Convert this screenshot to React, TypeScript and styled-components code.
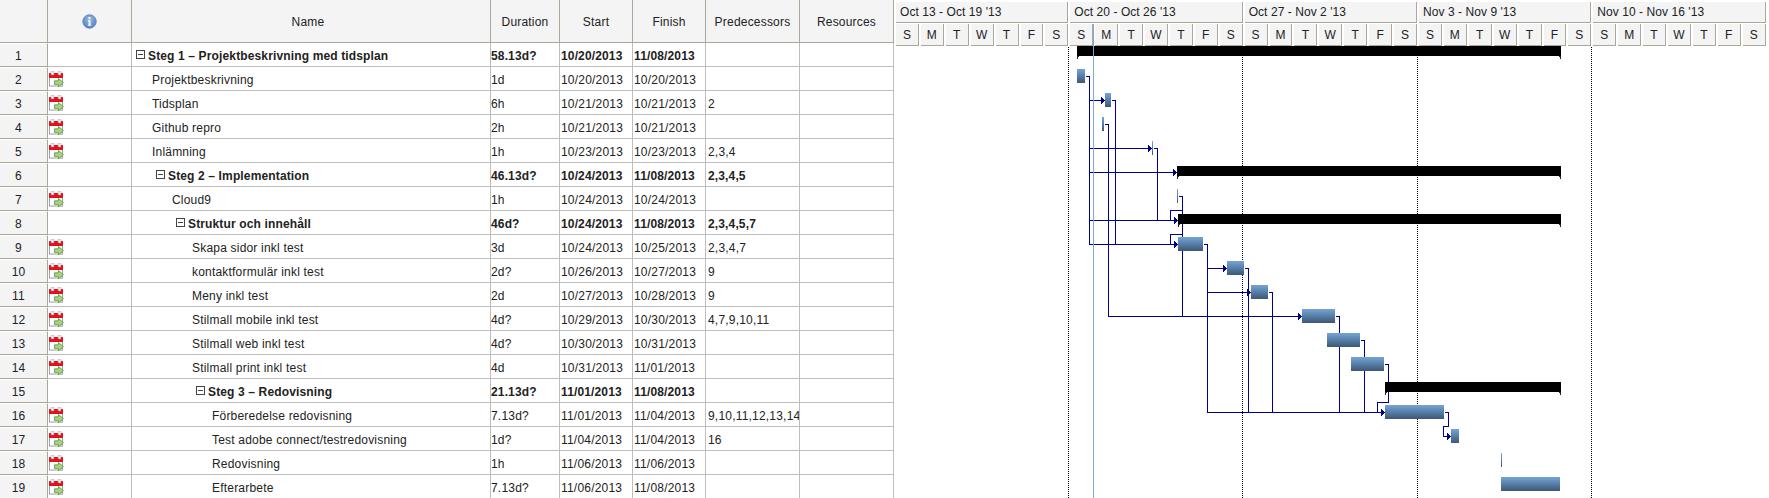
import styled, { createGlobalStyle } from 'styled-components';

const COLUMNS = '48px 84px 359px 69px 73px 73px 94px 94px';
const TAN = '#aca899';
const GRID = '#bdbdbd';
const LINK = '#00008b';

const GlobalStyle = createGlobalStyle`
  html, body {
    margin: 0;
    padding: 0;
    background: #fff;
    overflow: hidden;
  }
  body {
    font-family: "Liberation Sans", Arial, sans-serif;
    font-size: 12px;
    letter-spacing: 0.2px;
    color: #222;
  }
`;

const S = {
  Page: styled.div`
    display: flex;
    width: 1769px;
    height: 498px;
    overflow: hidden;
  `,
  Table: styled.div`
    width: 894px;
    flex: none;
  `,
  HeaderRow: styled.div`
    display: grid;
    grid-template-columns: ${COLUMNS};
    height: 43px;
  `,
  HeaderCell: styled.div<{ $shift?: number }>`
    display: flex;
    align-items: center;
    justify-content: center;
    padding: 1px ${(p) => p.$shift ?? 0}px 0 0;
    background: #f4f4f4;
    border-right: 1px solid ${TAN};
    border-bottom: 1px solid ${TAN};
    box-sizing: border-box;
  `,
  Row: styled.div<{ $summary: boolean }>`
    display: grid;
    grid-template-columns: ${COLUMNS};
    height: 24px;
    font-weight: ${(p) => (p.$summary ? 700 : 400)};
    letter-spacing: ${(p) => (p.$summary ? 0.14 : 0.2)}px;
  `,
  RowNumber: styled.div`
    display: flex;
    align-items: center;
    justify-content: center;
    padding: 1px 10px 0 0;
    background: #f4f4f4;
    border-top: 1px solid #fff;
    border-right: 1px solid ${TAN};
    border-bottom: 1px solid ${TAN};
    box-sizing: border-box;
    font-weight: 400;
  `,
  IconCell: styled.div`
    display: flex;
    align-items: flex-start;
    padding: 4px 0 0 1px;
    border-right: 1px solid ${GRID};
    border-bottom: 1px solid ${GRID};
    box-sizing: border-box;
  `,
  NameCell: styled.div<{ $indent: number }>`
    display: flex;
    align-items: center;
    gap: 3px;
    padding: 2px 0 0 ${(p) => p.$indent}px;
    border-right: 1px solid ${GRID};
    border-bottom: 1px solid ${GRID};
    box-sizing: border-box;
    white-space: nowrap;
  `,
  Collapse: styled.span`
    position: relative;
    flex: none;
    width: 9px;
    height: 9px;
    margin-top: -2px;
    border: 1px solid #444;
    box-sizing: border-box;
    &::after {
      content: '';
      position: absolute;
      left: 1px;
      right: 1px;
      top: 3px;
      height: 1px;
      background: #444;
    }
  `,
  DataCell: styled.div<{ $pad: number }>`
    display: flex;
    align-items: center;
    padding: 2px 0 0 ${(p) => p.$pad}px;
    border-right: 1px solid ${GRID};
    border-bottom: 1px solid ${GRID};
    box-sizing: border-box;
    white-space: nowrap;
    overflow: hidden;
  `,
  Gantt: styled.div`
    position: relative;
    flex: 1;
    min-width: 0;
  `,
  Weeks: styled.div`
    display: grid;
    grid-template-columns: repeat(5, 174.33px);
    height: 46px;
    letter-spacing: 0.06px;
  `,
  Week: styled.div`
    display: flex;
    flex-direction: column;
    padding-top: 2px;
    box-sizing: border-box;
  `,
  WeekTitle: styled.div`
    display: flex;
    align-items: center;
    height: 21px;
    margin-left: 2px;
    padding-left: 4px;
    background: #f4f4f4;
    border-right: 1px solid ${TAN};
    border-bottom: 1px solid ${TAN};
    box-sizing: border-box;
    white-space: nowrap;
  `,
  Days: styled.div`
    display: grid;
    grid-template-columns: repeat(7, 1fr);
    margin-top: 1px;
    height: 22px;
  `,
  Day: styled.div`
    display: flex;
    align-items: center;
    justify-content: center;
    margin-left: 2px;
    background: #f4f4f4;
    border-right: 1px solid ${TAN};
    border-bottom: 1px solid ${TAN};
    box-sizing: border-box;
  `,
  Chart: styled.svg`
    display: block;
  `,
  TodayLine: styled.div`
    position: absolute;
    left: 199px;
    top: 24px;
    bottom: 0;
    width: 1px;
    background: #7fa6d4;
  `,
};

type Task = {
  level: number;
  name: string;
  duration: string;
  start: string;
  finish: string;
  preds?: string;
  summary?: boolean;
};

const TASKS: Task[] = [
  { level: 0, name: 'Steg 1 – Projektbeskrivning med tidsplan', duration: '58.13d?', start: '10/20/2013', finish: '11/08/2013', summary: true },
  { level: 1, name: 'Projektbeskrivning', duration: '1d', start: '10/20/2013', finish: '10/20/2013' },
  { level: 1, name: 'Tidsplan', duration: '6h', start: '10/21/2013', finish: '10/21/2013', preds: '2' },
  { level: 1, name: 'Github repro', duration: '2h', start: '10/21/2013', finish: '10/21/2013' },
  { level: 1, name: 'Inlämning', duration: '1h', start: '10/23/2013', finish: '10/23/2013', preds: '2,3,4' },
  { level: 1, name: 'Steg 2 – Implementation', duration: '46.13d?', start: '10/24/2013', finish: '11/08/2013', preds: '2,3,4,5', summary: true },
  { level: 2, name: 'Cloud9', duration: '1h', start: '10/24/2013', finish: '10/24/2013' },
  { level: 2, name: 'Struktur och innehåll', duration: '46d?', start: '10/24/2013', finish: '11/08/2013', preds: '2,3,4,5,7', summary: true },
  { level: 3, name: 'Skapa sidor inkl test', duration: '3d', start: '10/24/2013', finish: '10/25/2013', preds: '2,3,4,7' },
  { level: 3, name: 'kontaktformulär inkl test', duration: '2d?', start: '10/26/2013', finish: '10/27/2013', preds: '9' },
  { level: 3, name: 'Meny inkl test', duration: '2d', start: '10/27/2013', finish: '10/28/2013', preds: '9' },
  { level: 3, name: 'Stilmall mobile inkl test', duration: '4d?', start: '10/29/2013', finish: '10/30/2013', preds: '4,7,9,10,11' },
  { level: 3, name: 'Stilmall web inkl test', duration: '4d?', start: '10/30/2013', finish: '10/31/2013' },
  { level: 3, name: 'Stilmall print inkl test', duration: '4d', start: '10/31/2013', finish: '11/01/2013' },
  { level: 3, name: 'Steg 3 – Redovisning', duration: '21.13d?', start: '11/01/2013', finish: '11/08/2013', summary: true },
  { level: 4, name: 'Förberedelse redovisning', duration: '7.13d?', start: '11/01/2013', finish: '11/04/2013', preds: '9,10,11,12,13,14' },
  { level: 4, name: 'Test adobe connect/testredovisning', duration: '1d?', start: '11/04/2013', finish: '11/04/2013', preds: '16' },
  { level: 4, name: 'Redovisning', duration: '1h', start: '11/06/2013', finish: '11/06/2013' },
  { level: 4, name: 'Efterarbete', duration: '7.13d?', start: '11/06/2013', finish: '11/08/2013' },
];

const WEEKS = ["Oct 13 - Oct 19 '13", "Oct 20 - Oct 26 '13", "Oct 27 - Nov 2 '13", "Nov 3 - Nov 9 '13", "Nov 10 - Nov 16 '13"];
const DAYS = ['S', 'M', 'T', 'W', 'T', 'F', 'S'];

// chart coordinates are page pixels, the viewBox takes care of the offset
const GRIDLINES = [1068, 1242, 1417, 1591];

const SUMMARY_BARS = [
  { x1: 1077, x2: 1561, y: 46 },
  { x1: 1177, x2: 1561, y: 166 },
  { x1: 1178, x2: 1561, y: 214 },
  { x1: 1385, x2: 1561, y: 382 },
];

const TASK_BARS = [
  { x1: 1077, x2: 1085, y: 69 },
  { x1: 1105, x2: 1111, y: 93 },
  { x1: 1102, x2: 1104, y: 117 },
  { x1: 1152, x2: 1153, y: 141 },
  { x1: 1177, x2: 1178, y: 189 },
  { x1: 1178, x2: 1203, y: 237 },
  { x1: 1227, x2: 1244, y: 261 },
  { x1: 1251, x2: 1268, y: 285 },
  { x1: 1302, x2: 1335, y: 309 },
  { x1: 1327, x2: 1360, y: 333 },
  { x1: 1351, x2: 1384, y: 357 },
  { x1: 1385, x2: 1444, y: 405 },
  { x1: 1451, x2: 1459, y: 429 },
  { x1: 1501, x2: 1502, y: 453 },
  { x1: 1501, x2: 1560, y: 477 },
];

const LINKS = [
  'M1085 76H1089V244H1174',
  'M1089 100H1101',
  'M1089 148H1148',
  'M1089 172H1173',
  'M1089 220H1174',
  'M1111 100H1115V244',
  'M1104 124H1108V316H1298',
  'M1153 148H1157V220',
  'M1178 196H1182V316',
  'M1182 210H1170V220',
  'M1182 234H1170V244',
  'M1203 244H1207V412H1381',
  'M1207 268H1223',
  'M1207 292H1247',
  'M1244 268H1248V412',
  'M1268 292H1272V412',
  'M1335 316H1339V412',
  'M1360 340H1364V412',
  'M1384 364H1388V402H1377V412',
  'M1444 412H1448V426H1443V436H1447',
];

const ARROWS = [
  { x: 1105, y: 100 },
  { x: 1152, y: 148 },
  { x: 1177, y: 172 },
  { x: 1178, y: 220 },
  { x: 1178, y: 244 },
  { x: 1227, y: 268 },
  { x: 1251, y: 292 },
  { x: 1302, y: 316 },
  { x: 1385, y: 412 },
  { x: 1451, y: 436 },
];

const InfoIcon = () => (
  <svg width="15" height="15" viewBox="0 0 15 15">
    <defs>
      <radialGradient id="infoFill" cx="50%" cy="35%" r="65%">
        <stop offset="0%" stopColor="#9dbde4" />
        <stop offset="100%" stopColor="#4f80bd" />
      </radialGradient>
    </defs>
    <circle cx="7.5" cy="7.5" r="6.7" fill="url(#infoFill)" stroke="#5f8cc4" strokeWidth="1" />
    <rect x="6.5" y="3" width="2" height="2" fill="#fff" />
    <path d="M6 6.2h2.5V10.8H9.4v1H5.8v-1h.8V7.2H6z" fill="#fff" />
  </svg>
);

const TaskIcon = () => (
  <svg width="15" height="16" viewBox="0 0 15 16">
    <rect x="0.5" y="5.5" width="13" height="9.5" fill="#fff" stroke="#a0a0a0" />
    <rect x="0" y="2" width="14" height="5" fill="#e2101e" />
    <rect x="2" y="0" width="3" height="4" rx="1" fill="#eee" stroke="#999" strokeWidth="0.6" />
    <rect x="9" y="0" width="3" height="4" rx="1" fill="#eee" stroke="#999" strokeWidth="0.6" />
    <path d="M5.5 9.8h4V7.5l5 4.2-5 4.2v-2.3h-4z" fill="#a4d480" stroke="#5a9a3a" strokeWidth="0.8" />
  </svg>
);

const GanttChart = () => (
  <S.Chart width="875" height="452" viewBox="894 46 875 452" shapeRendering="crispEdges">
    <defs>
      <linearGradient id="taskFill" x1="0" y1="0" x2="0" y2="1">
        <stop offset="0%" stopColor="#74a5d8" />
        <stop offset="100%" stopColor="#3d5875" />
      </linearGradient>
    </defs>
    {GRIDLINES.map((x) => (
      <line key={x} x1={x + 0.5} y1={47} x2={x + 0.5} y2={498} stroke="#000" strokeDasharray="1 1" />
    ))}
    {LINKS.map((d) => (
      <path key={d} d={d.replace(/([MHV])(\d+)(?: (\d+))?/g, (_, c, a, b) => `${c}${+a + 0.5}${b ? ` ${+b + 0.5}` : ''}`)} fill="none" stroke={LINK} />
    ))}
    {ARROWS.map((a) => (
      <polygon
        key={`${a.x}-${a.y}`}
        points={`${a.x - 4},${a.y - 3} ${a.x},${a.y + 0.5} ${a.x - 4},${a.y + 4}`}
        fill={LINK}
      />
    ))}
    {SUMMARY_BARS.map((b) => (
      <g key={b.y}>
        <rect x={b.x1} y={b.y} width={b.x2 - b.x1} height={10} fill="#000" />
        <polygon points={`${b.x1},${b.y + 10} ${b.x1 + 2},${b.y + 10} ${b.x1},${b.y + 14}`} fill="#222" />
        <polygon points={`${b.x2},${b.y + 10} ${b.x2 - 2},${b.y + 10} ${b.x2},${b.y + 14}`} fill="#222" />
      </g>
    ))}
    {TASK_BARS.map((b) => (
      <rect key={b.y} x={b.x1} y={b.y} width={b.x2 - b.x1} height={14} fill="url(#taskFill)" />
    ))}
  </S.Chart>
);

const HEADERS = ['Duration', 'Start', 'Finish', 'Predecessors', 'Resources'];

const App = () => {
  return (
    <S.Page>
      <GlobalStyle />
      <S.Table>
        <S.HeaderRow>
          <S.HeaderCell />
          <S.HeaderCell>
            <InfoIcon />
          </S.HeaderCell>
          <S.HeaderCell $shift={6}>Name</S.HeaderCell>
          {HEADERS.map((h) => (
            <S.HeaderCell key={h}>{h}</S.HeaderCell>
          ))}
        </S.HeaderRow>
        {TASKS.map((t, i) => (
          <S.Row key={t.name} $summary={!!t.summary}>
            <S.RowNumber>{i + 1}</S.RowNumber>
            <S.IconCell>{!t.summary && <TaskIcon />}</S.IconCell>
            <S.NameCell $indent={t.level * 20 + (t.summary ? 4 : 0)}>
              {t.summary && <S.Collapse />}
              {t.name}
            </S.NameCell>
            <S.DataCell $pad={0}>{t.duration}</S.DataCell>
            <S.DataCell $pad={1}>{t.start}</S.DataCell>
            <S.DataCell $pad={1}>{t.finish}</S.DataCell>
            <S.DataCell $pad={2}>{t.preds}</S.DataCell>
            <S.DataCell $pad={2} />
          </S.Row>
        ))}
      </S.Table>
      <S.Gantt>
        <S.Weeks>
          {WEEKS.map((w) => (
            <S.Week key={w}>
              <S.WeekTitle>{w}</S.WeekTitle>
              <S.Days>
                {DAYS.map((d, i) => (
                  <S.Day key={i}>{d}</S.Day>
                ))}
              </S.Days>
            </S.Week>
          ))}
        </S.Weeks>
        <GanttChart />
        <S.TodayLine />
      </S.Gantt>
    </S.Page>
  );
};

export default App;
